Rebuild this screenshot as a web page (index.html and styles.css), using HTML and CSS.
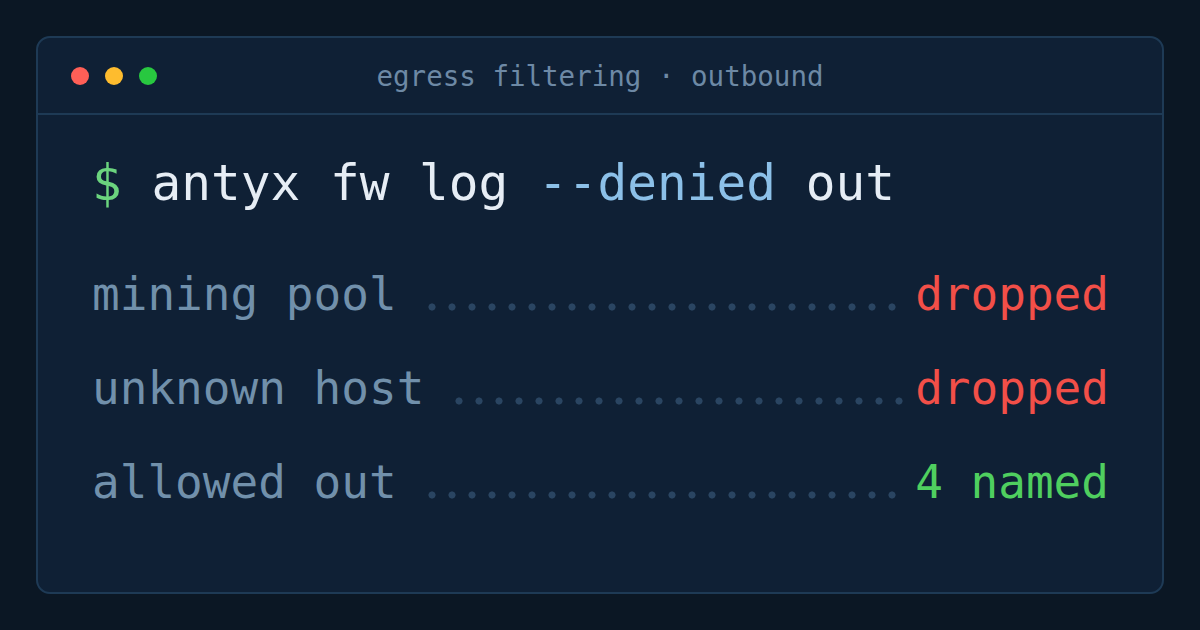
FILE: index.html
```html
<!DOCTYPE html>
<html lang="en">
<head>
<meta charset="utf-8">
<title>egress filtering · outbound</title>
<link rel="stylesheet" href="styles.css">
</head>
<body>
<main class="window">
  <header class="titlebar">
    <div class="lights">
      <span class="light red"></span>
      <span class="light yellow"></span>
      <span class="light green"></span>
    </div>
    <div class="title">egress filtering · outbound</div>
    <div class="spacer"></div>
  </header>
  <section class="term">
    <div class="cmd"><span class="prompt">$</span> antyx fw log <span class="flag">--denied</span> out</div>
    <div class="row"><span class="label">mining pool</span><span class="dots"></span><span class="val bad">dropped</span></div>
    <div class="row"><span class="label">unknown host</span><span class="dots"></span><span class="val bad">dropped</span></div>
    <div class="row"><span class="label">allowed out</span><span class="dots"></span><span class="val ok">4 named</span></div>
  </section>
</main>
</body>
</html>
```

FILE: styles.css
```css
* { box-sizing: border-box; }
html, body { margin: 0; height: 100%; }
body {
  background: #0b1724;
  padding: 36px;
  font-family: "DejaVu Sans Mono", "Liberation Mono", monospace;
}
.window {
  height: 558px;
  background: #0f2035;
  border: 2px solid #1e3a55;
  border-radius: 14px;
  overflow: hidden;
  display: flex;
  flex-direction: column;
}
.titlebar {
  height: 77px;
  border-bottom: 2px solid #1e3a55;
  display: grid;
  grid-template-columns: 1fr auto 1fr;
  align-items: center;
  padding: 0 33px;
}
.lights { display: flex; gap: 16px; }
.light { width: 18px; height: 18px; border-radius: 50%; display: block; }
.red { background: #ff5f57; }
.yellow { background: #febc2e; }
.green { background: #28c840; }
.title {
  color: #6d89a5;
  font-size: 27.5px;
  line-height: 30px;
  white-space: pre;
}
.term {
  padding: 38px 53px 0 54px;
}
.cmd {
  font-size: 49.4px;
  line-height: 60px;
  color: #e6edf5;
  white-space: pre;
  margin-bottom: 34px;
}
.prompt { color: #6bd47e; }
.flag { color: #8cc0e8; }
.row {
  display: flex;
  font-size: 46px;
  line-height: 94px;
  white-space: pre;
}
.label { color: #7190ab; }
.dots {
  flex: 1;
  margin: 0 10px 0 25px;
  background-image: radial-gradient(circle, #2a4562 3.2px, transparent 3.9px);
  background-size: 20px 10px;
  background-repeat: repeat-x;
  background-position: 0 54.5px;
}
.val.bad { color: #f24f48; }
.val.ok { color: #4fcf5f; }
```
